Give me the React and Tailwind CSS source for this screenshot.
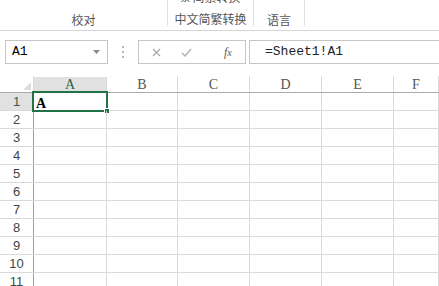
import React from 'react';

const cols = [
  { name: 'A', w: 'w-[73px]' },
  { name: 'B', w: 'w-[71px]' },
  { name: 'C', w: 'w-[72px]' },
  { name: 'D', w: 'w-[72px]' },
  { name: 'E', w: 'w-[72px]' },
  { name: 'F', w: 'flex-1' },
];

const rows = [1, 2, 3, 4, 5, 6, 7, 8, 9, 10, 11];

const cjk = { fontFamily: '"Noto Sans CJK SC", "Noto Sans", sans-serif' };
const mono = { fontFamily: '"Liberation Mono", monospace' };
const serif = { fontFamily: '"Liberation Serif", serif' };
const sans = { fontFamily: '"Liberation Sans", Arial, sans-serif' };

function Ribbon() {
  return (
    <div className="h-[31px] border-b border-[#d5d5d5] flex bg-white" style={cjk}>
      <div className="w-[168px] h-[26px] border-r border-[#e1e1e1] flex items-end justify-center">
        <span className="text-[12px] leading-[14px] text-[#555] translate-y-[1px]">校对</span>
      </div>
      <div className="w-[86px] h-[26px] border-r border-[#e1e1e1] flex flex-col items-center justify-between overflow-hidden">
        <div className="flex items-center gap-[2px] -mt-[10px] text-[12px] leading-[14px] text-[#444]">
          <span className="text-[10px]">繁</span>
          <span>简繁转换</span>
        </div>
        <span className="text-[12px] leading-[14px] text-[#555]">中文简繁转换</span>
      </div>
      <div className="w-[51px] h-[26px] border-r border-[#e1e1e1] flex items-end justify-center">
        <span className="text-[12px] leading-[14px] text-[#555] translate-y-[1px]">语言</span>
      </div>
    </div>
  );
}

function FormulaBar() {
  return (
    <div className="flex items-center mt-[9px] h-[24px]">
      <div className="ml-[5px] w-[103px] h-full border border-[#c6c6c6] flex items-center justify-between pl-[6px] pr-[7px]">
        <span className="text-[13px] text-black" style={mono}>A1</span>
        <svg width="7" height="4" viewBox="0 0 7 4">
          <path d="M0 0h7L3.5 4z" fill="#8a8a8a" />
        </svg>
      </div>
      <div className="w-[30px] flex flex-col items-center gap-[3px]">
        <span className="w-[2px] h-[2px] bg-[#b8b8b8]" />
        <span className="w-[2px] h-[2px] bg-[#b8b8b8]" />
        <span className="w-[2px] h-[2px] bg-[#b8b8b8]" />
      </div>
      <div className="w-[108px] h-full border border-[#c6c6c6] flex items-center">
        <svg className="ml-[13px]" width="9" height="9" viewBox="0 0 9 9">
          <path d="M1 1l7 7M8 1L1 8" stroke="#a6a6a6" strokeWidth="1.2" />
        </svg>
        <svg className="ml-[20px]" width="11" height="9" viewBox="0 0 11 9">
          <path d="M1 5l3 3 6-7" stroke="#b0b0b0" strokeWidth="1.4" fill="none" />
        </svg>
        <span className="ml-[32px] text-[12px] italic text-[#555]" style={serif}>
          f<span className="text-[10px]">x</span>
        </span>
      </div>
      <div className="ml-[3px] flex-1 h-full border-y border-l border-[#c6c6c6] flex items-center pl-[15px]">
        <span className="text-[13px] text-[#222]" style={mono}>=Sheet1!A1</span>
      </div>
    </div>
  );
}

function Grid() {
  return (
    <div className="mt-[12px]">
      <div className="flex h-[17px] border-b border-[#ababab]">
        <div className="w-[34px] border-r border-[#dadada] flex items-end justify-end pr-[2px] pb-[2px]">
          <svg width="8" height="8" viewBox="0 0 8 8">
            <path d="M8 0v8H0z" fill="#dcdcdc" />
          </svg>
        </div>
        {cols.map((c) => (
          <div
            key={c.name}
            className={`${c.w} border-r border-[#dadada] flex items-center justify-center text-[14px] ${
              c.name === 'A' ? 'bg-[#e1e1e1] text-[#2d5f43] mt-[1px]' : 'text-[#555]'
            }`}
            style={serif}
          >
            {c.name}
          </div>
        ))}
      </div>
      {rows.map((r) => (
        <div key={r} className="flex h-[18px] border-b border-[#dadada]">
          <div
            className={`w-[34px] border-r border-[#9f9f9f] flex items-center justify-center text-[13px] ${
              r === 1 ? 'bg-[#e1e1e1] text-[#2d5f43]' : 'text-[#444]'
            }`}
            style={sans}
          >
            {r}
          </div>
          {cols.map((c) => (
            <div key={c.name} className={`${c.w} border-r border-[#dadada] relative`}>
              {r === 1 && c.name === 'A' && (
                <>
                  <span className="absolute left-[2px] top-[0px] text-[14px] font-bold text-black" style={serif}>
                    A
                  </span>
                  <div className="absolute -left-[2px] -top-[2px] w-[76px] h-[21px] border-2 border-[#217346]" />
                  <div className="absolute left-[70px] top-[15px] w-[6px] h-[6px] bg-[#217346] border border-white" />
                </>
              )}
            </div>
          ))}
        </div>
      ))}
    </div>
  );
}

export default function App() {
  return (
    <div className="w-[439px] h-[286px] bg-white overflow-hidden">
      <Ribbon />
      <FormulaBar />
      <Grid />
    </div>
  );
}
